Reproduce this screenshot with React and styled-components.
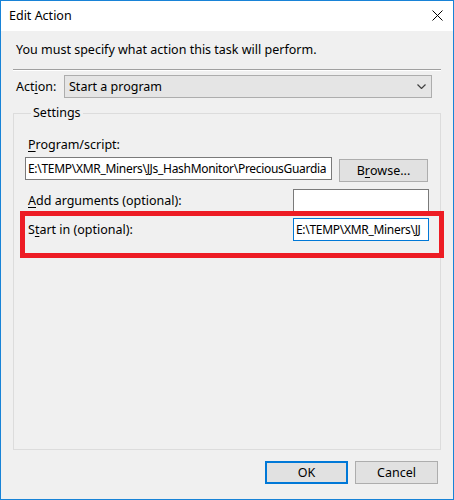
import React from "react";
import styled, { createGlobalStyle } from "styled-components";

const GlobalStyle = createGlobalStyle`
    html, body {
        margin : 0;
        padding : 0;
        background : #f0f0f0;
    }
    * {
        box-sizing : border-box;
    }
`;

const App = () => (
    <>
        <GlobalStyle/>
        <Window>
            <TitleBar>
                <Title>Edit Action</Title>
                <CloseButton aria-label="Close">
                    <svg width="11" height="11" viewBox="0 0 11 11">
                        <path d="M0.5 0.5 L10.5 10.5 M10.5 0.5 L0.5 10.5" stroke="#000" strokeWidth="1" fill="none"/>
                    </svg>
                </CloseButton>
            </TitleBar>
            <Body>
                <Instruction>You must specify what action this task will perform.</Instruction>
                <Separator/>
                <ActionRow>
                    <Label>Act<u>i</u>on:</Label>
                    <Dropdown>
                        <span>Start a program</span>
                        <svg width="9" height="5" viewBox="0 0 9 5">
                            <path d="M0.5 0.5 L4.5 4.5 L8.5 0.5" stroke="#404040" strokeWidth="1.2" fill="none"/>
                        </svg>
                    </Dropdown>
                </ActionRow>
                <GroupBox>
                    <Legend>Settings</Legend>
                    <FieldLabel><u>P</u>rogram/script:</FieldLabel>
                    <ProgramRow>
                        <TextBox width="307px">E:\TEMP\XMR_Miners\JJs_HashMonitor\PreciousGuardia</TextBox>
                        <Button width="89px">B<u>r</u>owse...</Button>
                    </ProgramRow>
                    <OptionRow>
                        <Label><u>A</u>dd arguments (optional):</Label>
                        <TextBox width="136px"/>
                    </OptionRow>
                    <OptionRow gap="6px">
                        <Label>S<u>t</u>art in (optional):</Label>
                        <TextBox width="136px" focused>E:\TEMP\XMR_Miners\JJ</TextBox>
                        <Highlight/>
                    </OptionRow>
                </GroupBox>
                <ButtonRow>
                    <Button width="83px" primary>OK</Button>
                    <Button width="83px">Cancel</Button>
                </ButtonRow>
            </Body>
        </Window>
    </>
);

const Window = styled.div`
    width : 454px;
    height : 500px;
    border : 1px solid #1883d7;
    display : flex;
    flex-direction : column;
    font-family : "Noto Sans", "Open Sans", sans-serif;
    font-size : 12.5px;
    line-height : 16px;
    color : #000;
    background : #f0f0f0;
`;

const TitleBar = styled.div`
    height : 30px;
    background : #fff;
    display : flex;
    align-items : center;
    justify-content : space-between;
    padding : 0 10px 0 8px;
`;

const Title = styled.span`
    font-size : 12.5px;
`;

const CloseButton = styled.div`
    display : flex;
    align-items : center;
    margin-top : -1px;
`;

const Body = styled.div`
    flex : 1;
    display : flex;
    flex-direction : column;
    padding : 11px 12px 15px 12px;
`;

const Instruction = styled.div`
    padding-left : 3px;
`;

const Separator = styled.div`
    margin-top : 11px;
    height : 2px;
    border-top : 1px solid #a0a0a0;
    border-bottom : 1px solid #fff;
`;

const ActionRow = styled.div`
    margin-top : 4px;
    display : flex;
    align-items : center;
    justify-content : space-between;
    padding-left : 3px;
    padding-right : 9px;
`;

const Label = styled.span`
    white-space : nowrap;
    u {
        text-decoration-thickness : 1px;
        text-underline-offset : 2px;
    }
`;

const Dropdown = styled.div`
    width : 368px;
    height : 23px;
    background : #e5e5e5;
    border : 1px solid #adadad;
    display : flex;
    align-items : center;
    justify-content : space-between;
    padding : 0 4px 0 4px;
    svg {
        margin-right : 1px;
    }
`;

const GroupBox = styled.fieldset`
    flex : 1;
    margin : 7px 0 0 0;
    padding : 6px 11px 0 11px;
    border : 1px solid #dcdcdc;
    min-width : 0;
`;

const Legend = styled.legend`
    margin-left : 6px;
    padding : 0 2px;
`;

const FieldLabel = styled.div`
    padding-left : 3px;
    margin-top : 10px;
    u {
        text-decoration-thickness : 1px;
        text-underline-offset : 2px;
    }
`;

const ProgramRow = styled.div`
    margin-top : 4px;
    display : flex;
    align-items : flex-start;
    justify-content : space-between;
    padding-right : 1px;
    > :last-child {
        margin-top : 2px;
    }
`;

const OptionRow = styled.div`
    position : relative;
    margin-top : ${props => props.gap || "7px"};
    display : flex;
    align-items : center;
    justify-content : space-between;
    padding-left : 3px;
`;

const TextBox = styled.div`
    width : ${props => props.width};
    height : 23px;
    background : #fff;
    border : 1px solid ${props => props.focused ? "#0078d7" : "#7a7a7a"};
    padding : 0 1px 0 2px;
    font-size : 12px;
    letter-spacing : -0.3px;
    white-space : nowrap;
    overflow : hidden;
    line-height : 21px;
`;

const Button = styled.div`
    width : ${props => props.width};
    height : 23px;
    background : #e1e1e1;
    border : ${props => props.primary ? "2px solid #0078d7" : "1px solid #adadad"};
    display : flex;
    align-items : center;
    justify-content : center;
    u {
        text-decoration-thickness : 1px;
        text-underline-offset : 2px;
    }
`;

const Highlight = styled.div`
    position : absolute;
    left : -5px;
    top : -7px;
    right : -15px;
    bottom : -17px;
    border : 5px solid #ed1c24;
    pointer-events : none;
`;

const ButtonRow = styled.div`
    margin-top : 11px;
    display : flex;
    justify-content : flex-end;
    gap : 7px;
    padding-right : 3px;
`;

export default App;
